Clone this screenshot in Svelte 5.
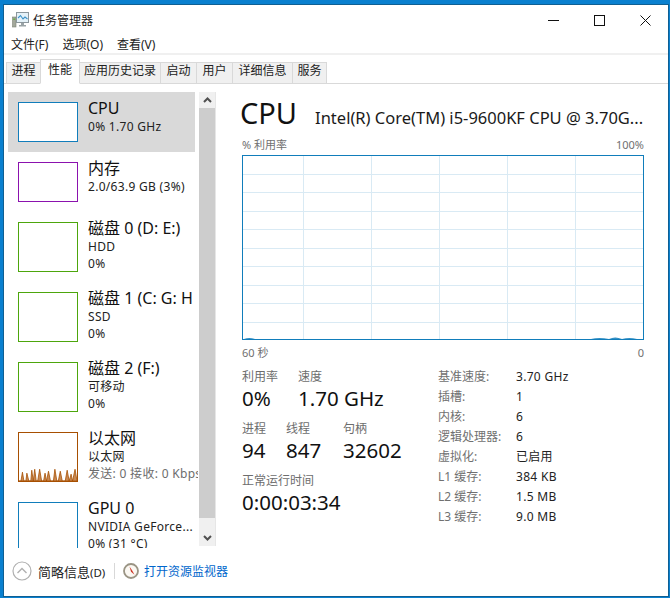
<script>
  const tabs = [
    { label: '进程', w: 34 }, { label: '性能', w: 40, active: true }, { label: '应用历史记录', w: 81 },
    { label: '启动', w: 36 }, { label: '用户', w: 36 }, { label: '详细信息', w: 60 }, { label: '服务', w: 35 }
  ];
  const items = [
    { k: 'cpu', title: 'CPU', lines: ['0% 1.70 GHz'], color: '#117dbb', tall: false, selected: true },
    { k: 'mem', title: '内存', lines: ['2.0/63.9 GB (3%)'], color: '#8b12ae', tall: false },
    { k: 'd0', title: '磁盘 0 (D: E:)', lines: ['HDD', '0%'], color: '#4da60c', tall: true },
    { k: 'd1', title: '磁盘 1 (C: G: H', lines: ['SSD', '0%'], color: '#4da60c', tall: true },
    { k: 'd2', title: '磁盘 2 (F:)', lines: ['可移动', '0%'], color: '#4da60c', tall: true },
    { k: 'eth', title: '以太网', lines: ['以太网', '发送: 0 接收: 0 Kbps'], color: '#a74f01', tall: true, gray: true },
    { k: 'gpu', title: 'GPU 0', lines: ['NVIDIA GeForce...', '0% (31 °C)'], color: '#117dbb', tall: true }
  ];
  const vLines = [60, 128, 196, 264, 332];
  const hLines = [18, 36, 55, 73, 92, 110, 129, 147, 166];
  const spikes = 'M0 49 L2 49 L3.5 40 L5 49 L7 49 L8 41 L10 49 L12 49 L13 38 L14.5 49 L16 37 L17.5 49 L19 49 L21 37 L23 49 L25 49 L26.5 41 L28 49 L30 39 L32 49 L35 49 L36.5 37 L38.5 49 L40 49 L42 39 L44 49 L47 49 L49 38 L51 49 L53 42 L54.5 49 L57 37 L59 49 Z';
  const info = [
    ['基准速度:', '3.70 GHz'], ['插槽:', '1'], ['内核:', '6'], ['逻辑处理器:', '6'],
    ['虚拟化:', '已启用'], ['L1 缓存:', '384 KB'], ['L2 缓存:', '1.5 MB'], ['L3 缓存:', '9.0 MB']
  ];
</script>

<div class="window">
  <header class="titlebar">
    <svg class="appicon" width="17" height="16" viewBox="0 0 17 16">
      <rect x="0.5" y="5" width="3.500" height="10" fill="#a3a89c" stroke="#7d8476" stroke-width="0.600"/>
      <rect x="1.200" y="6.500" width="2" height="1.500" fill="#6fb04a"/>
      <rect x="4.500" y="0.500" width="12" height="10" fill="#e4f1f8" stroke="#8b979d"/>
      <path d="M6 6 L8.500 3.500 L11 7 L13 5 L15.500 7" fill="none" stroke="#3f93c8" stroke-width="1.100"/>
      <path d="M9 11h3v2h2v1.500H7V13h2z" fill="#9aa3a6"/>
    </svg>
    <span class="title">任务管理器</span>
    <div class="winbtns">
      <svg width="11" height="11" viewBox="0 0 11 11"><path d="M0 5.500H11" stroke="#111"/></svg>
      <svg width="11" height="11" viewBox="0 0 11 11"><rect x="0.500" y="0.500" width="10" height="10" fill="none" stroke="#111"/></svg>
      <svg width="11" height="11" viewBox="0 0 11 11"><path d="M0.500 0.500L10.500 10.500M10.500 0.500L0.500 10.500" stroke="#111"/></svg>
    </div>
  </header>

  <nav class="menu">
    <span>文件(F)</span><span>选项(O)</span><span>查看(V)</span>
  </nav>

  <div class="tabs">
    {#each tabs as t}
      <div class="tab" class:active={t.active} style="width:{t.w}px">{t.label}</div>
    {/each}
  </div>

  <main class="body">
    <aside class="sidebar">
      <div class="list">
        {#each items as it}
          <div class="item" class:selected={it.selected} class:tall={it.tall}>
            <div class="thumb" style="border-color:{it.color}">
              {#if it.k === 'eth'}
                <svg width="58" height="48" viewBox="0 0 59 49" preserveAspectRatio="none"><path d={spikes} fill="#c98a55" stroke="#a74f01" stroke-width="0.800"/></svg>
              {/if}
            </div>
            <div class="itext">
              <div class="ititle">{it.title}</div>
              {#each it.lines as l, i}
                <div class="isub" class:gray={it.gray && i === 1}>{l}</div>
              {/each}
            </div>
          </div>
        {/each}
      </div>
      <div class="scrollbar">
        <div class="sbtn"><svg width="9" height="6" viewBox="0 0 9 6"><path d="M1 5L4.500 1.500L8 5" fill="none" stroke="#505050" stroke-width="2"/></svg></div>
        <div class="strack"><div class="sthumb"></div></div>
        <div class="sbtn"><svg width="9" height="6" viewBox="0 0 9 6"><path d="M1 1L4.500 4.500L8 1" fill="none" stroke="#505050" stroke-width="2"/></svg></div>
      </div>
    </aside>

    <section class="detail">
      <div class="heading">
        <span class="big">CPU</span>
        <span class="model">Intel(R) Core(TM) i5-9600KF CPU @ 3.70G...</span>
      </div>
      <div class="axis top"><span>% 利用率</span><span>100%</span></div>
      <div class="chart">
        <svg width="400" height="183" viewBox="0 0 400 183">
          {#each vLines as x}<path d="M{x}.5 0V183" stroke="#d9eaf4"/>{/each}
          {#each hLines as y}<path d="M0 {y}.5H400" stroke="#d9eaf4"/>{/each}
          <path d="M1 183 Q6 181 12 183 Z M348 183 Q356 181 366 183 Q372 180 379 183 Q386 181 394 183 Z" fill="#117dbb" opacity="0.850"/>
        </svg>
      </div>
      <div class="axis bottom"><span>60 秒</span><span>0</span></div>

      <div class="stats">
        <div class="leftstats">
          <div class="srow first">
            <div class="stat w56"><div class="slabel">利用率</div><div class="sval">0%</div></div>
            <div class="stat"><div class="slabel">速度</div><div class="sval">1.70 GHz</div></div>
          </div>
          <div class="srow">
            <div class="stat w44"><div class="slabel">进程</div><div class="sval">94</div></div>
            <div class="stat w57"><div class="slabel">线程</div><div class="sval">847</div></div>
            <div class="stat"><div class="slabel">句柄</div><div class="sval">32602</div></div>
          </div>
          <div class="srow">
            <div class="stat"><div class="slabel">正常运行时间</div><div class="sval">0:00:03:34</div></div>
          </div>
        </div>
        <dl class="info">
          {#each info as [k, v]}
            <dt>{k}</dt><dd>{v}</dd>
          {/each}
        </dl>
      </div>
    </section>
  </main>

  <footer class="footer">
    <svg width="20" height="20" viewBox="0 0 20 20"><circle cx="10" cy="10" r="9" fill="#fff" stroke="#b0b0b0" stroke-width="1.200"/><path d="M5.500 12L10 7.500L14.500 12" fill="none" stroke="#b0b0b0" stroke-width="1.400"/></svg>
    <span class="fewer">简略信息<small>(D)</small></span>
    <span class="fsep"></span>
    <svg width="16" height="16" viewBox="0 0 16 16"><circle cx="8" cy="8" r="7" fill="#fbf8f2" stroke="#9a9484" stroke-width="1.800"/><path d="M6.500 3.500L9.200 7.500L11.500 11.800L8 8.800Z" fill="#cf3a2c"/></svg>
    <span class="link">打开资源监视器</span>
  </footer>
</div>

<style>
  :global(html), :global(body) { margin: 0; height: 598px; overflow: hidden; background: #0a80cf; }
  .window {
    box-sizing: border-box;
    width: 666px; height: 593px; margin: 4px 0 0 3px;
    background: #fff;
    border: 1px solid #0f5f92;
    display: flex; flex-direction: column;
    font-family: "Noto Sans", "Noto Sans CJK SC", sans-serif;
    color: #111;
  }
  .titlebar { height: 30px; display: flex; align-items: center; padding: 0 0 1px 8px; box-sizing: border-box; flex: none; }
  .title { margin-left: 4px; font-size: 12px; color: #222; }
  .winbtns { margin-left: auto; display: flex; gap: 35px; padding-right: 17px; margin-top: 2px; }
  .winbtns svg { display: block; }
  .menu {
    height: 18px; flex: none; display: flex; gap: 14px; padding-left: 7px; align-items: center;
    font-size: 12px; color: #222; border-bottom: 2px solid #f0f0f0;
  }
  .tabs {
    height: 29px; flex: none; box-sizing: border-box; display: flex; align-items: flex-end;
    padding-left: 2px; border-bottom: 1px solid #d9d9d9;
  }
  .tab {
    box-sizing: border-box; height: 22px; margin-bottom: -1px; background: #f0f0f0;
    border: 1px solid #d9d9d9; border-right-width: 0; text-align: center;
    font-size: 12px; line-height: 16px; color: #222;
  }
  .tab:last-child { border-right-width: 1px; }
  .tab.active { height: 25px; background: #fff; border-bottom-color: #fff; border-right-width: 1px; line-height: 19px; margin-right: -1px; position: relative; }
  .body { flex: 1; display: flex; min-height: 0; }
  .sidebar { width: 234px; flex: none; display: flex; padding: 8px 0 0 4px; box-sizing: border-box; height: 465px; }
  .list { width: 191px; height: 456px; overflow: hidden; flex: none; }
  .item { display: flex; width: 187px; height: 60px; box-sizing: border-box; padding: 10px 0 0 10px; }
  .item.tall { height: 70px; }
  .item.selected { background: #d9d9d9; }
  .thumb { box-sizing: border-box; width: 60px; height: 40px; border: 1px solid; background: #fff; flex: none; overflow: hidden; line-height: 0; }
  .tall .thumb { height: 50px; }
  .itext { margin-left: 10px; margin-top: -4px; white-space: nowrap; overflow: hidden; width: 110px; flex: none; }
  .ititle { font-size: 16px; line-height: 20px; color: #111; }
  .isub { font-size: 12px; letter-spacing: 0.3px; line-height: 17px; color: #222; }
  .isub.gray { color: #6d6d6d; }
  .scrollbar { width: 16px; height: 454px; background: #f0f0f0; display: flex; flex-direction: column; border-right: 1px solid #e6e6e6; flex: none; }
  .sbtn { height: 16px; display: flex; align-items: center; justify-content: center; flex: none; }
  .strack { flex: 1; }
  .sthumb { height: 410px; background: #cdcdcd; }
  .detail { flex: 1; min-width: 0; padding: 0 20px 0 4px; display: flex; flex-direction: column; }
  .heading { height: 53px; flex: none; display: flex; align-items: baseline; padding-top: 8px; box-sizing: border-box; }
  .big { font-size: 29px; line-height: 42px; color: #111; margin-left: -2px; }
  .model { font-size: 16.500px; margin-left: 18px; color: #1a1a1a; white-space: nowrap; }
  .axis { display: flex; justify-content: space-between; font-size: 11px; color: #707070; flex: none; width: 402px; }
  .axis.top { height: 18px; line-height: 15px; }
  .axis.bottom { height: 21px; line-height: 17px; padding-top: 4px; box-sizing: border-box; }
  .chart { box-sizing: border-box; width: 402px; height: 185px; border: 1px solid #117dbb; flex: none; line-height: 0; }
  .stats { display: flex; flex: none; margin-top: 8px; }
  .leftstats { width: 196px; flex: none; }
  .srow { display: flex; margin-bottom: 9px; }
  .stat.w56 { width: 56px; }
  .stat.w57 { width: 57px; }
  .stat.w44 { width: 44px; }
  .slabel { font-size: 12px; line-height: 16px; color: #6d6d6d; }
  .sval { font-size: 20.500px; line-height: 27px; color: #111; white-space: nowrap; }
  .info { margin: -3px 0 0; display: grid; grid-template-columns: 78px auto; grid-auto-rows: 20px; align-items: center; }
  dt { font-size: 12px; color: #707070; white-space: nowrap; }
  dd { margin: 0; font-size: 12px; letter-spacing: 0.3px; color: #222; white-space: nowrap; }
  .footer { height: 46px; box-sizing: border-box; flex: none; display: flex; align-items: center; padding: 0 0 4px 8px; }
  .fewer { margin-left: 6px; font-size: 13px; color: #222; width: 76px; white-space: nowrap; }
  .fewer small { font-size: 11.500px; }
  .fsep { width: 1px; height: 16px; background: #d8d8d8; margin-right: 8px; }
  .link { margin-left: 5px; font-size: 12px; color: #0066cc; }
</style>
